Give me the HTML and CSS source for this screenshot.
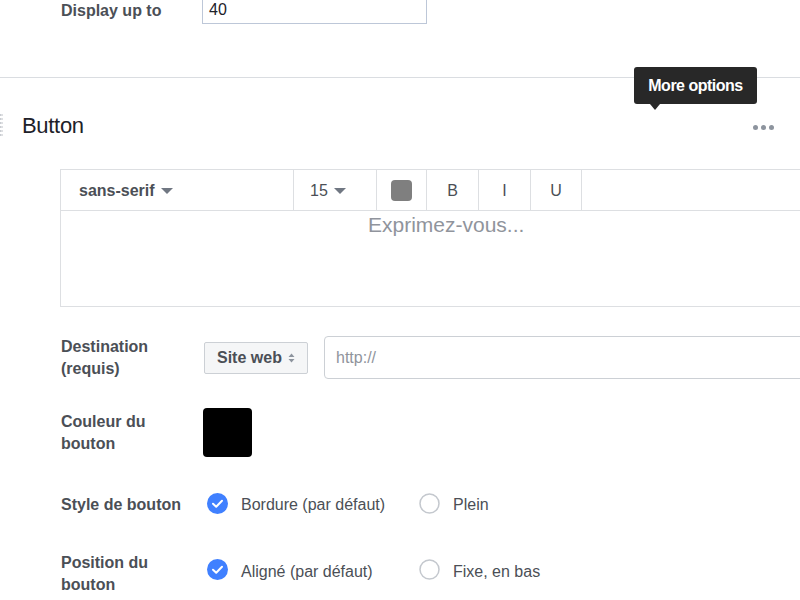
FILE: index.html
```html
<!DOCTYPE html>
<html lang="fr">
<head>
<meta charset="utf-8">
<title>Button</title>
<link rel="stylesheet" href="styles.css">
</head>
<body>
<div class="page">
  <div class="display-row">
    <span class="lbl lbl-inline">Display up to</span>
    <div class="num-input">40</div>
  </div>
  <div class="divider"></div>

  <section class="block">
    <div class="handle"></div>
    <div class="block-head">
      <h2 class="block-title">Button</h2>
      <span class="more"><i></i><i></i><i></i></span>
    </div>
    <div class="tooltip">More options</div>

    <div class="editor">
      <div class="toolbar">
        <div class="tb-cell tb-font">sans-serif <span class="caret"></span></div>
        <div class="tb-cell tb-size">15 <span class="caret"></span></div>
        <div class="tb-cell tb-center tb-color"><span class="swatch-sm"></span></div>
        <div class="tb-cell tb-center tb-b">B</div>
        <div class="tb-cell tb-center tb-i">I</div>
        <div class="tb-cell tb-center tb-u">U</div>
      </div>
      <div class="editor-body">Exprimez-vous...</div>
    </div>

    <div class="form">
      <div class="row row-dest">
        <div class="lbl lbl-dest">Destination (requis)</div>
        <div class="select">Site web
          <svg class="updown" width="7" height="10" viewBox="0 0 7 10"><path d="M3.5 0.5 L6.5 4 H0.5 Z M3.5 9.5 L6.5 6 H0.5 Z" fill="#8d949e"/></svg>
        </div>
        <div class="url-input">http://</div>
      </div>

      <div class="row row-color">
        <div class="lbl lbl-color">Couleur du bouton</div>
        <div class="swatch"></div>
      </div>

      <div class="row row-style">
        <div class="lbl">Style de bouton</div>
        <div class="options">
          <div class="opt">
            <svg class="radio" width="21" height="21" viewBox="0 0 21 21"><circle cx="10.5" cy="10.5" r="10.5" fill="#4080ff"/><path d="M6 10.8 L9.2 13.8 L15 7.8" fill="none" stroke="#fff" stroke-width="2" stroke-linecap="round" stroke-linejoin="round"/></svg>
            <span>Bordure (par défaut)</span>
          </div>
          <div class="opt">
            <svg class="radio" width="21" height="21" viewBox="0 0 21 21"><circle cx="10.5" cy="10.5" r="9.5" fill="#fff" stroke="#c4c8ce" stroke-width="1.5"/></svg>
            <span>Plein</span>
          </div>
        </div>
      </div>

      <div class="row row-pos">
        <div class="lbl lbl-pos">Position du bouton</div>
        <div class="options options-pos">
          <div class="opt">
            <svg class="radio" width="21" height="21" viewBox="0 0 21 21"><circle cx="10.5" cy="10.5" r="10.5" fill="#4080ff"/><path d="M6 10.8 L9.2 13.8 L15 7.8" fill="none" stroke="#fff" stroke-width="2" stroke-linecap="round" stroke-linejoin="round"/></svg>
            <span>Aligné (par défaut)</span>
          </div>
          <div class="opt">
            <svg class="radio" width="21" height="21" viewBox="0 0 21 21"><circle cx="10.5" cy="10.5" r="9.5" fill="#fff" stroke="#c4c8ce" stroke-width="1.5"/></svg>
            <span>Fixe, en bas</span>
          </div>
        </div>
      </div>
    </div>
  </section>
</div>
</body>
</html>
```
FILE: styles.css
```css
html, body {
  margin: 0;
  padding: 0;
  background: #ffffff;
  overflow: hidden;
}
body {
  font-family: "Liberation Sans", Arial, Helvetica, sans-serif;
  color: #4b4f56;
}
.page {
  width: 800px;
  position: relative;
}

/* top row */
.display-row {
  display: flex;
  align-items: center;
  margin-top: -6px;
  padding-left: 61px;
}
.lbl {
  font-size: 16px;
  font-weight: bold;
  line-height: 22px;
  color: #4b4f56;
  width: 130px;
  margin-right: 13px;
  flex: none;
}
.lbl-inline {
  width: 141px;
  margin-right: 0;
  padding-top: 4px;
}
.num-input {
  width: 217px;
  border: 1px solid #bdc7d8;
  padding-left: 6px;
  padding-top: 2px;
  font-size: 16px;
  line-height: 26px;
  color: #1d2129;
  box-sizing: content-box;
  height: 26px;
}
.divider {
  margin-top: 53px;
  height: 1px;
  background: #dadde1;
}

/* block */
.block {
  position: relative;
}
.handle {
  position: absolute;
  left: 0;
  top: 35px;
  width: 3px;
  height: 24px;
  background-image: radial-gradient(circle, #c9ccd1 1px, transparent 1.3px);
  background-size: 3px 4px;
  background-position: -1px 0;
}
.block-head {
  display: flex;
  align-items: center;
  justify-content: space-between;
  padding-top: 34px;
  padding-left: 22px;
  padding-right: 26px;
}
.block-title {
  margin: 0;
  font-size: 22px;
  font-weight: normal;
  line-height: 28px;
  color: #1d2129;
  letter-spacing: -0.3px;
}
.more {
  display: flex;
  gap: 3px;
  margin-top: 3px;
}
.more i {
  display: block;
  width: 5px;
  height: 5px;
  border-radius: 50%;
  background: #8d949e;
}
.tooltip {
  position: absolute;
  left: 634px;
  top: -11px;
  width: 123px;
  height: 37px;
  background: #282828;
  border-radius: 3px;
  color: #ffffff;
  font-size: 16px;
  font-weight: bold;
  letter-spacing: -0.5px;
  line-height: 37px;
  text-align: center;
}
.tooltip::after {
  content: "";
  position: absolute;
  left: 16px;
  top: 37px;
  border-left: 5px solid transparent;
  border-right: 5px solid transparent;
  border-top: 6px solid #282828;
}

/* editor */
.editor {
  margin-top: 29px;
  margin-left: 60px;
  width: 780px;
  border: 1px solid #dddfe2;
}
.toolbar {
  display: flex;
  height: 40px;
  border-bottom: 1px solid #dddfe2;
}
.tb-cell {
  height: 40px;
  border-right: 1px solid #dddfe2;
  display: flex;
  align-items: center;
  font-size: 16px;
  color: #4b4f56;
  box-sizing: border-box;
  padding-top: 1px;
}
.tb-center {
  justify-content: center;
}
.tb-font {
  width: 233px;
  padding-left: 18px;
  font-weight: bold;
}
.tb-size {
  width: 83px;
  padding-left: 16px;
}
.tb-color { width: 50px; padding-top: 0; }
.tb-b { width: 52px; }
.tb-i { width: 52px; }
.tb-u { width: 51px; }
.caret {
  display: inline-block;
  margin-left: 6px;
  width: 0;
  height: 0;
  border-left: 6px solid transparent;
  border-right: 6px solid transparent;
  border-top: 6px solid #707782;
}
.swatch-sm {
  width: 21px;
  height: 21px;
  border-radius: 4px;
  background: #7f7f7f;
}
.editor-body {
  height: 95px;
  padding: 2px 0 0 307px;
  box-sizing: border-box;
  font-size: 21px;
  line-height: 24px;
  color: #90949c;
}

/* form */
.form {
  padding-left: 61px;
}
.row {
  display: flex;
  align-items: flex-start;
}
.row-dest {
  margin-top: 29px;
}
.lbl-dest {
  margin-bottom: -1px;
}
.select {
  flex: none;
  margin-top: 6px;
  width: 104px;
  height: 32px;
  box-sizing: border-box;
  border: 1px solid #ccd0d5;
  border-radius: 2px;
  background: #f5f6f7;
  padding-left: 12px;
  display: flex;
  align-items: center;
  gap: 6px;
  font-size: 16px;
  font-weight: bold;
  color: #4b4f56;
}
.url-input {
  flex: none;
  margin-left: 16px;
  width: 520px;
  height: 43px;
  box-sizing: border-box;
  border: 1px solid #ccd0d5;
  border-radius: 4px;
  padding-left: 11px;
  font-size: 16px;
  line-height: 41px;
  color: #90949c;
}
.row-color {
  margin-top: 29px;
}
.lbl-color {
  margin-top: 3px;
  margin-right: 12px;
}
.swatch {
  width: 49px;
  height: 49px;
  border-radius: 4px;
  background: #000000;
}
.row-style {
  margin-top: 35px;
}
.row-style .lbl {
  padding-top: 2px;
  margin-bottom: -2px;
}
.row-pos {
  margin-top: 37px;
}
.lbl-pos {
  margin-top: 1px;
}
.options {
  display: flex;
  padding-left: 3px;
}
.options-pos {
  margin-top: 7px;
}
.opt {
  width: 212px;
  display: flex;
  align-items: center;
  gap: 13px;
  font-size: 16px;
  line-height: 22px;
  color: #4b4f56;
}
.opt span {
  padding-top: 2px;
  margin-bottom: -2px;
}
.options-pos .opt span {
  padding-top: 3px;
  margin-bottom: -3px;
}
.radio {
  flex: none;
}
```
